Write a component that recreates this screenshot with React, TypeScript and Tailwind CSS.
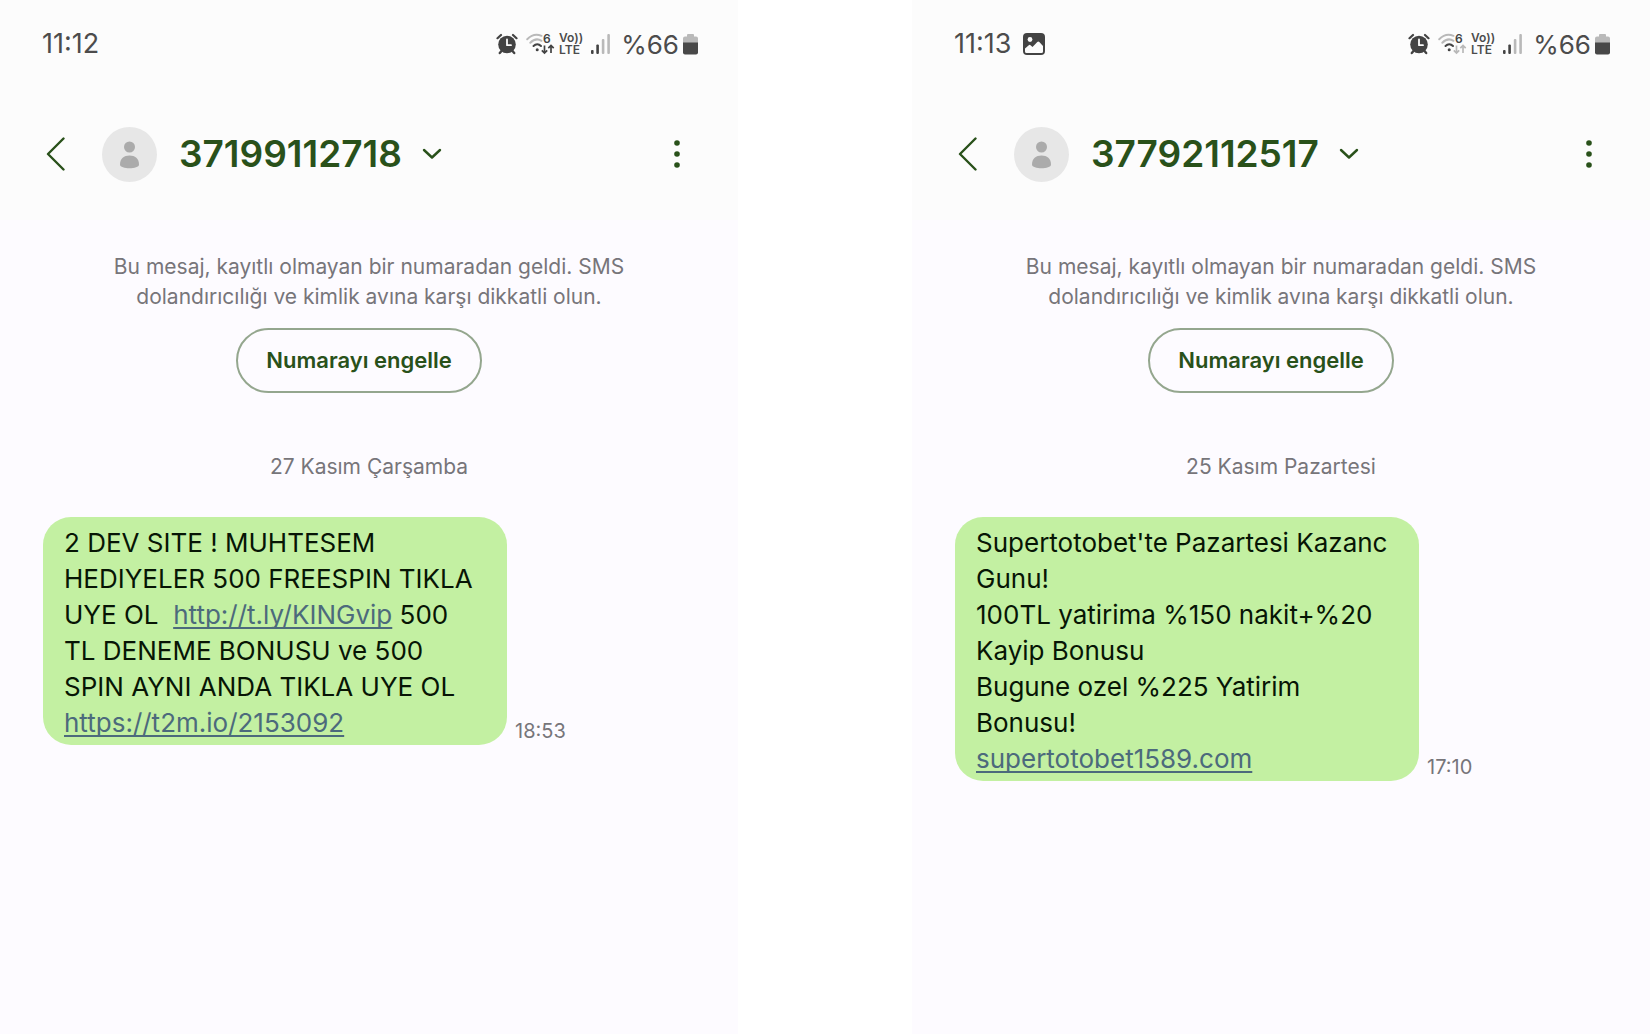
import type { ReactNode } from "react";

type Conversation = {
  time: string;
  hasPicture: boolean;
  wifiActive: boolean;
  number: string;
  date: string;
  message: ReactNode;
  sentAt: string;
};

function MessageLink({ href, children }: { href: string; children: ReactNode }) {
  return (
    <a href={href} className="text-[#4c6a7c] underline decoration-2 underline-offset-3 [text-decoration-skip-ink:none]">
      {children}
    </a>
  );
}

const conversations: Conversation[] = [
  {
    time: "11:12",
    hasPicture: false,
    wifiActive: true,
    number: "37199112718",
    date: "27 Kasım Çarşamba",
    message: (
      <>
        {"2 DEV SITE ! MUHTESEM HEDIYELER 500 FREESPIN TIKLA UYE OL  "}
        <MessageLink href="http://t.ly/KINGvip">http://t.ly/KINGvip</MessageLink>
        {" 500 TL DENEME BONUSU ve 500 SPIN AYNI ANDA TIKLA UYE OL "}
        <MessageLink href="https://t2m.io/2153092">https://t2m.io/2153092</MessageLink>
      </>
    ),
    sentAt: "18:53",
  },
  {
    time: "11:13",
    hasPicture: true,
    wifiActive: false,
    number: "37792112517",
    date: "25 Kasım Pazartesi",
    message: (
      <>
        {"Supertotobet'te Pazartesi Kazanc Gunu!\n100TL yatirima %150 nakit+%20 Kayip Bonusu\nBugune ozel %225 Yatirim Bonusu!\n"}
        <MessageLink href="http://supertotobet1589.com">supertotobet1589.com</MessageLink>
      </>
    ),
    sentAt: "17:10",
  },
];

function AlarmIcon() {
  return (
    <svg width="22" height="22" viewBox="0 0 22 22" fill="none" aria-hidden="true">
      <circle cx="11" cy="11.5" r="8.8" fill="#434343" />
      <path d="M1.500 5.200 5 2M20.500 5.200 17 2" stroke="#434343" strokeWidth="2.200" strokeLinecap="round" />
      <path d="M5.500 18 3.800 20M16.500 18l1.700 2" stroke="#434343" strokeWidth="2.400" strokeLinecap="round" />
      <path d="M11 6.500v5.700h4" stroke="#fcfcfc" strokeWidth="1.800" strokeLinecap="round" strokeLinejoin="round" />
    </svg>
  );
}

function WifiIcon({ active }: { active: boolean }) {
  const arrow = active ? "#434343" : "#b9b9b9";
  return (
    <svg width="29" height="24" viewBox="0 0 29 24" fill="none" overflow="visible" aria-hidden="true">
      <path d="M1.200 7.200C5.500 2.800 11 1.800 15.500 3.800" stroke="#b9b9b9" strokeWidth="2" strokeLinecap="round" />
      <path d="M4.300 10.800C7.800 7.200 12 6.600 15.500 8.800" stroke="#b9b9b9" strokeWidth="2" strokeLinecap="round" />
      <path d="M7.500 14c2.200-2.200 5.300-2.200 7.500 0" stroke="#434343" strokeWidth="2" strokeLinecap="round" />
      <circle cx="11.200" cy="17.700" r="1.500" fill="#434343" />
      <text x="17" y="11" fontSize="12" fontWeight="600" fill="#434343" fontFamily="Inter, sans-serif">6</text>
      <path d="M18.500 13.500v7.500M15.800 18.400l2.700 2.700 2.700-2.700M25 21v-7.500M22.300 16.200l2.700-2.700 2.700 2.700" stroke={arrow} strokeWidth="1.700" />
    </svg>
  );
}

function SignalIcon() {
  return (
    <svg width="20" height="21" viewBox="0 0 20 21" aria-hidden="true">
      <rect x="0" y="16" width="2.600" height="4" rx="1" fill="#434343" />
      <rect x="5.300" y="10.500" width="2.600" height="9.500" rx="1" fill="#434343" />
      <rect x="10.800" y="5" width="2.600" height="15" rx="1" fill="#b9b9b9" />
      <rect x="16.300" y="0" width="2.600" height="20" rx="1" fill="#b9b9b9" />
    </svg>
  );
}

function BatteryIcon() {
  return (
    <svg width="15" height="21" viewBox="0 0 15 21" aria-hidden="true">
      <path d="M5 0h5q1 0 1 1v1.500h2q2 0 2 2V9H0V4.500q0-2 2-2h2V1q0-1 1-1z" fill="#b9b9b9" />
      <path d="M0 8.500h15v10q0 2-2 2H2q-2 0-2-2z" fill="#484848" />
    </svg>
  );
}

function PictureIcon() {
  return (
    <svg width="22" height="22" viewBox="0 0 22 22" aria-hidden="true">
      <rect width="22" height="22" rx="4" fill="#434343" />
      <circle cx="7" cy="6.500" r="2.400" fill="#fcfcfc" />
      <path d="M2 15.500 5.800 12.200q.9-.7 1.700 0l2 1.900 4.800-5q1-1 2 0l3.700 4v5.400q0 1.500-1.500 1.500h-15Q2 20 2 18.500z" fill="#fcfcfc" />
    </svg>
  );
}

function StatusBar({ time, hasPicture, wifiActive }: Pick<Conversation, "time" | "hasPicture" | "wifiActive">) {
  return (
    <div className="flex h-22 items-center justify-between pr-10 pl-10.5 text-[#4c4c4c]">
      <div className="flex items-center gap-3">
        <span className="text-[27px]">{time}</span>
        {hasPicture && <PictureIcon />}
      </div>
      <div className="flex items-center">
        <AlarmIcon />
        <div className="ml-2 flex">
          <WifiIcon active={wifiActive} />
        </div>
        <div className="ml-1 flex flex-col text-[12px] leading-3 font-semibold">
          <span>Vo))</span>
          <span>LTE</span>
        </div>
        <div className="ml-2">
          <SignalIcon />
        </div>
        <span className="ml-2.5 text-[26px]">%66</span>
        <div className="ml-1">
          <BatteryIcon />
        </div>
      </div>
    </div>
  );
}

function ConversationHeader({ number }: { number: string }) {
  return (
    <div className="flex h-33 items-center pr-13 pl-11.5 text-[#29511a]">
      <button type="button" aria-label="Geri" className="mr-9">
        <svg width="20" height="34" viewBox="0 0 20 34" fill="none" stroke="currentColor" strokeWidth="2.400" strokeLinecap="round" strokeLinejoin="round">
          <path d="M17.500 1.500 2 17l15.500 15.500" />
        </svg>
      </button>
      <svg width="55" height="55" viewBox="0 0 55 55" aria-hidden="true">
        <circle cx="27.500" cy="27.500" r="27.500" fill="#e7e7e7" />
        <circle cx="27.500" cy="20" r="5.500" fill="#ababab" />
        <path d="M18 37.500C18 31.500 22 28.500 27.500 28.500S37 31.500 37 37.500c0 5-19 5-19 0z" fill="#ababab" />
      </svg>
      <button type="button" className="ml-5.5 flex items-center gap-5">
        <h1 className="text-[37px] leading-11 font-semibold">{number}</h1>
        <svg width="20" height="12" viewBox="0 0 20 12" fill="none" stroke="currentColor" strokeWidth="2.400" strokeLinecap="round" strokeLinejoin="round" aria-hidden="true">
          <path d="m2 2 8 7.500L18 2" />
        </svg>
      </button>
      <button type="button" aria-label="Diğer seçenekler" className="ml-auto">
        <svg width="18" height="30" viewBox="0 0 18 30" fill="currentColor">
          <circle cx="9" cy="4" r="2.800" />
          <circle cx="9" cy="15" r="2.800" />
          <circle cx="9" cy="26" r="2.800" />
        </svg>
      </button>
    </div>
  );
}

function Phone({ conversation }: { conversation: Conversation }) {
  return (
    <section className="min-h-screen min-w-0 flex-1 bg-[#fdfbff]">
      <header className="bg-[#fcfcfc]">
        <StatusBar time={conversation.time} hasPicture={conversation.hasPicture} wifiActive={conversation.wifiActive} />
        <ConversationHeader number={conversation.number} />
      </header>
      <div className="flex flex-col items-center px-10 pt-8">
        <p className="max-w-[520px] text-center text-[21px] leading-[30px] text-[#77757a]">
          Bu mesaj, kayıtlı olmayan bir numaradan geldi. SMS dolandırıcılığı ve kimlik avına karşı dikkatli olun.
        </p>
        <button
          type="button"
          className="mt-4 mr-5 h-[65px] rounded-full border-2 border-[#94a68e] px-7 text-[22px] font-semibold text-[#29511a]"
        >
          Numarayı engelle
        </button>
        <time className="mt-14 text-[21px] leading-9 text-[#77757a]">{conversation.date}</time>
      </div>
      <div className="mt-8 flex items-end gap-2 pl-[43px]">
        <p className="w-[464px] rounded-[28px] bg-[#c3f0a2] px-[21px] pt-2 pb-1 text-[26px] leading-9 whitespace-pre-wrap text-[#071505]">
          {conversation.message}
        </p>
        <time className="text-[20px] leading-7 text-[#77757a]">{conversation.sentAt}</time>
      </div>
    </section>
  );
}

export default function App() {
  return (
    <main className="flex min-h-screen gap-[174px] bg-white font-['Inter',sans-serif]">
      {conversations.map((conversation) => (
        <Phone key={conversation.number} conversation={conversation} />
      ))}
    </main>
  );
}
